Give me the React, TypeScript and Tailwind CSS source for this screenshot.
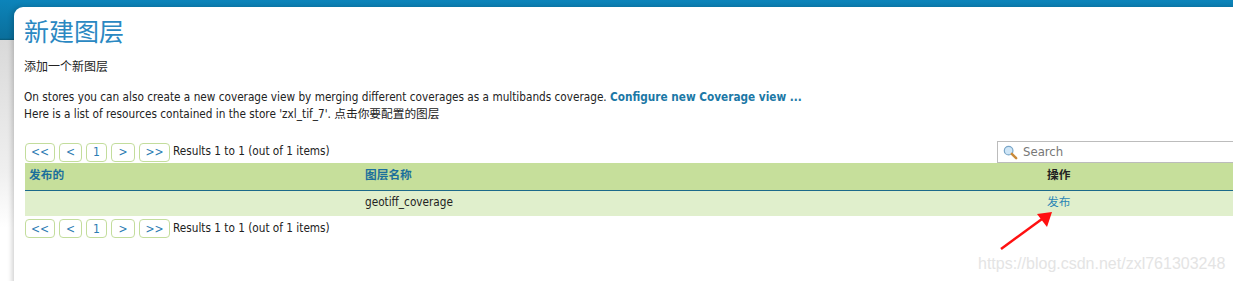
import React from 'react'

const PAGE_BTNS = [
  { label: '<<', w: 'w-[30px]' },
  { label: '<', w: 'w-[23px]' },
  { label: '1', w: 'w-[21px]' },
  { label: '>', w: 'w-[24px]' },
  { label: '>>', w: 'w-[31px]' },
]

function Pager() {
  return (
    <div className="flex items-center gap-[4px]">
      {PAGE_BTNS.map((b) => (
        <button
          key={b.label}
          className={`${b.w} h-[19px] flex items-center justify-center rounded-[4px] border border-[#c3dd9c] bg-white text-[12px] leading-none text-[#2b7cb3]`}
        >
          {b.label}
        </button>
      ))}
      <span className="-ml-[1px] text-[11.7px] text-[#222]">Results 1 to 1 (out of 1 items)</span>
    </div>
  )
}

function SearchBox() {
  return (
    <div className="w-[248px] h-[22px] border border-[#bcbcbc] bg-white flex items-center pl-[5px] gap-[5px]">
      <svg width="15" height="15" viewBox="0 0 16 16">
        <circle cx="6" cy="6" r="4.6" fill="#cfe6f7" stroke="#7aa6c8" strokeWidth="1.3" />
        <path d="M9.4 9.4 L14 14" stroke="#c98a3a" strokeWidth="2.6" strokeLinecap="round" />
      </svg>
      <span className="text-[13px] text-[#777]">Search</span>
    </div>
  )
}

export default function App() {
  return (
    <div
      className="relative w-[1233px] h-[281px] overflow-hidden bg-[linear-gradient(to_bottom,#0c84ba_0px,#0a6f9c_38px,#075876_40px,#d9d9d9_40px,#efefef_170px,#ffffff_228px)] font-['DejaVu_Sans_Condensed','Noto_Sans_CJK_SC',sans-serif] text-[#222]"
    >
      <div className="ml-[14px] mt-[7px] w-[1240px] h-[300px] bg-white rounded-tl-[9px] shadow-[-2px_0_5px_rgba(0,0,0,0.18)] pl-[11px] pt-[8px]">
        <div className="w-[1220px]">
          <h1 className="text-[25px] leading-[36px] text-[#2a88c2] font-normal -ml-[1px]">新建图层</h1>
          <p className="mt-[8px] text-[12px] leading-[17px] -ml-[1px]">添加一个新图层</p>
          <div className="mt-[13px] text-[11.7px] leading-[17px] -ml-[1px]">
            <p>
              On stores you can also create a new coverage view by merging different coverages as a multibands coverage.{' '}
              <a className="font-bold text-[#1b78a6]">Configure new Coverage view ...</a>
            </p>
            <p>Here is a list of resources contained in the store 'zxl_tif_7'. 点击你要配置的图层</p>
          </div>

          <div className="mt-[18px] flex items-center justify-between h-[22px]">
            <Pager />
            <SearchBox />
          </div>

          <table className="w-full border-collapse text-[11.7px]">
            <thead>
              <tr className="bg-[#c6df9b] h-[27px] border-b border-[#1c6a8a]">
                <th className="w-[336px] text-left pl-[4px] font-bold text-[#1c6f9c]">发布的</th>
                <th className="w-[682px] text-left pl-[4px] font-bold text-[#1c6f9c]">图层名称</th>
                <th className="text-left pl-[4px] font-bold text-[#222]">操作</th>
              </tr>
            </thead>
            <tbody>
              <tr className="bg-[#e0efcc] h-[26px]">
                <td className="pl-[4px]"></td>
                <td className="pl-[4px]">geotiff_coverage</td>
                <td className="pl-[4px] text-[#2b86b5]">发布</td>
              </tr>
            </tbody>
          </table>

          <div className="mt-[3px]">
            <Pager />
          </div>
        </div>
      </div>

      {/* red annotation arrow */}
      <svg className="absolute left-0 top-0" width="1233" height="281">
        <line x1="1001" y1="249" x2="1042" y2="219" stroke="#ff1010" strokeWidth="2.5" />
        <polygon points="1037,214 1052,212 1047,227" fill="#ff1010" />
      </svg>

      {/* watermark */}
      <span className="absolute left-[978px] top-[252px] font-['Liberation_Sans',sans-serif] text-[16px] text-[#e4e4e4]">
        https://blog.csdn.net/zxl761303248
      </span>
    </div>
  )
}
